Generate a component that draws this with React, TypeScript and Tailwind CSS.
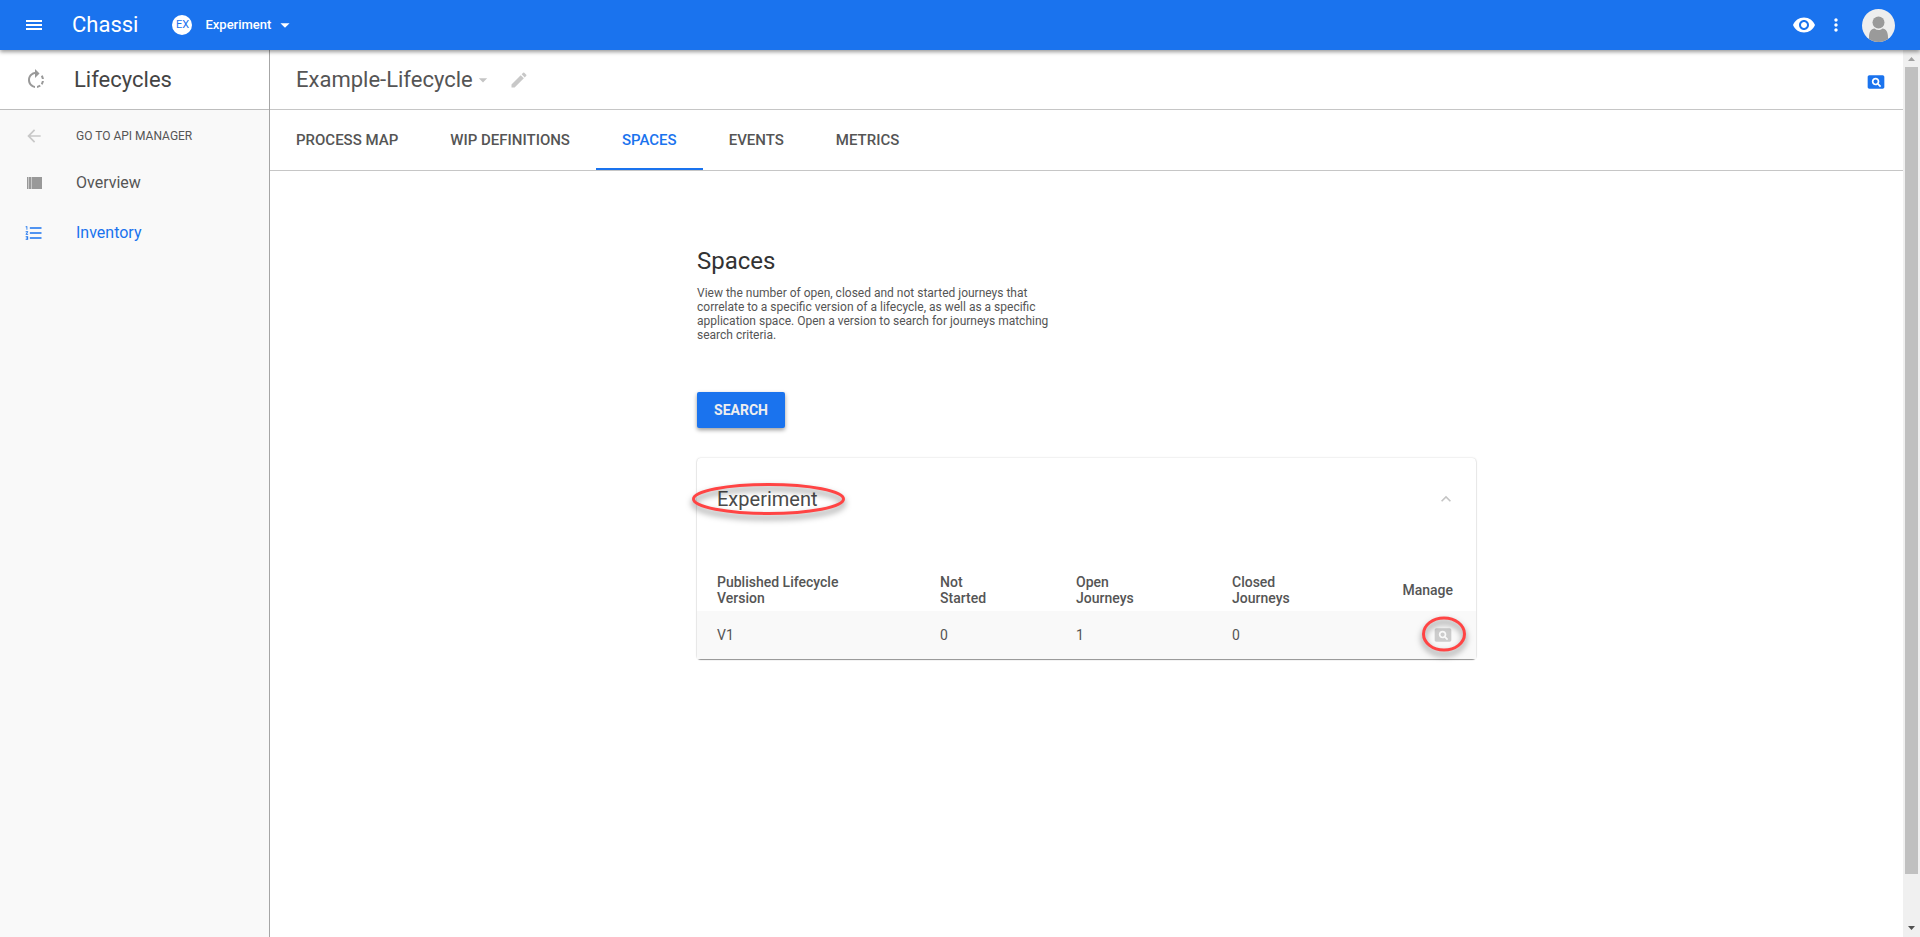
import { useState } from "react";
import {
  MdArrowBack,
  MdArrowDropDown,
  MdEdit,
  MdExpandLess,
  MdFormatListNumbered,
  MdMoreVert,
  MdPageview,
  MdRotateRight,
  MdVisibility,
} from "react-icons/md";

const tabs = ["PROCESS MAP", "WIP DEFINITIONS", "SPACES", "EVENTS", "METRICS"];

const versions = [{ name: "V1", notStarted: 0, open: 1, closed: 0 }];

function Header() {
  return (
    <header className="relative z-10 flex h-[50px] shrink-0 items-center bg-[#1a73ee] text-white shadow-[0_2px_4px_rgba(0,0,0,0.4)]">
      <button aria-label="Menu" className="ml-6">
        <svg className="size-5" viewBox="0 0 20 20" fill="currentColor">
          <path d="M2 5h16v2H2zM2 9h16v2H2zM2 13h16v2H2z" />
        </svg>
      </button>
      <a href="#" className="ml-7 text-[22px] leading-7">
        Chassi
      </a>
      <button className="ml-[34px] flex items-center text-[13px] font-medium">
        <span className="mr-[13px] flex size-5 items-center justify-center rounded-full bg-white text-[11px] font-normal text-[#1a73ee]">
          EX
        </span>
        Experiment
        <MdArrowDropDown size={22} className="ml-[3px]" />
      </button>
      <div className="ml-auto flex items-center pr-[25px]">
        <button aria-label="Watch">
          <MdVisibility size={24} />
        </button>
        <button aria-label="More options" className="ml-2.5">
          <MdMoreVert size={20} />
        </button>
        <button aria-label="Account" className="ml-4">
          <svg className="size-[33px]" viewBox="0 0 33 33">
            <clipPath id="avatar">
              <circle cx="16.5" cy="16.5" r="16.5" />
            </clipPath>
            <g clipPath="url(#avatar)">
              <rect width="33" height="33" fill="#eeeeee" />
              <circle cx="16.5" cy="13.5" r="6" fill="#9a9a9a" />
              <path
                d="M7 33v-5c0-5 2-8 5.500-8.500 2.500 2 5.500 2 8 0C24 20 26 23 26 28v5z"
                fill="#9a9a9a"
              />
            </g>
          </svg>
        </button>
      </div>
    </header>
  );
}

function Sidebar() {
  return (
    <aside className="flex w-[270px] shrink-0 flex-col border-r border-[#a6a6a6] bg-[#f9f9f9] text-[#555]">
      <div className="flex h-[60px] items-center border-b border-[#bdbdbd] bg-white pl-6">
        <MdRotateRight size={24} className="text-[#999]" />
        <h2 className="ml-[26px] text-[22px] leading-7 text-[#444]">
          Lifecycles
        </h2>
      </div>
      <nav>
        <a href="#" className="flex h-[52px] items-center pl-6 text-xs">
          <MdArrowBack size={20} className="text-[#c8c8c8]" />
          <span className="ml-8">GO TO API MANAGER</span>
        </a>
        <a href="#" className="flex h-[42px] items-center pl-6 text-base">
          <svg className="size-5" viewBox="0 0 20 20">
            <path d="M3 4h15v12H3z" fill="#999" />
            <path d="M4 4h1v12H4zM7 4h1v12H7z" fill="#c8c8c8" />
          </svg>
          <span className="ml-8">Overview</span>
        </a>
        <a
          href="#"
          className="flex h-[58px] items-center pl-6 text-base text-[#1a73ee]"
        >
          <MdFormatListNumbered size={20} />
          <span className="ml-8">Inventory</span>
        </a>
      </nav>
    </aside>
  );
}

function SpaceCard() {
  const [open, setOpen] = useState(true);

  return (
    <section className="rounded bg-white text-sm text-[#555] shadow-[0_1px_1px_rgba(0,0,0,0.4),0_0_2px_rgba(0,0,0,0.2)]">
      <div className="flex h-[82px] items-center justify-between px-5">
        <h2 className="relative text-xl text-[#4a4a4a]">
          Experiment
          <svg
            className="absolute -top-4 -left-7 h-[60px] w-[164px] overflow-visible drop-shadow-[0_4px_3px_rgba(0,0,0,0.5)]"
            viewBox="0 0 164 60"
            fill="none"
          >
            <ellipse
              cx="79.500"
              cy="30"
              rx="75"
              ry="14.500"
              stroke="#ff4444"
              strokeWidth="3"
            />
          </svg>
        </h2>
        <button
          aria-label="Toggle experiment"
          onClick={() => setOpen(!open)}
          className="text-[#c4c4c4]"
        >
          <MdExpandLess size={20} />
        </button>
      </div>
      {open && (
        <table className="w-full table-fixed text-left">
          <thead>
            <tr className="h-[71px] align-bottom leading-4">
              <th className="w-[223px] pb-[5px] pl-5 font-medium">
                Published Lifecycle
                <br />
                Version
              </th>
              <th className="w-[136px] pb-[5px] pl-5 font-medium">
                Not
                <br />
                Started
              </th>
              <th className="w-[156px] pb-[5px] pl-5 font-medium">
                Open
                <br />
                Journeys
              </th>
              <th className="pb-[5px] pl-5 font-medium">
                Closed
                <br />
                Journeys
              </th>
              <th className="pr-[23px] pb-[13px] text-right font-medium">
                Manage
              </th>
            </tr>
          </thead>
          <tbody>
            {versions.map((v) => (
              <tr key={v.name} className="h-12 bg-[#f9f9f9]">
                <td className="pl-5">{v.name}</td>
                <td className="pl-5">{v.notStarted}</td>
                <td className="pl-5">{v.open}</td>
                <td className="pl-5">{v.closed}</td>
                <td className="pr-[23px]">
                  <button
                    aria-label="Search journeys"
                    className="relative ml-auto block text-[#ccc]"
                  >
                    <MdPageview size={20} />
                    <svg
                      className="absolute -top-3 -left-3 size-11 max-w-none overflow-visible drop-shadow-[0_4px_3px_rgba(0,0,0,0.5)]"
                      viewBox="0 0 44 44"
                      fill="none"
                    >
                      <ellipse
                        cx="23"
                        cy="21"
                        rx="20.500"
                        ry="16"
                        stroke="#ff4444"
                        strokeWidth="3"
                      />
                    </svg>
                  </button>
                </td>
              </tr>
            ))}
          </tbody>
        </table>
      )}
    </section>
  );
}

function Scrollbar() {
  return (
    <div className="flex w-[17px] shrink-0 flex-col items-center bg-[#f0f0f0]">
      <svg className="h-[17px] w-[17px] shrink-0" viewBox="0 0 17 17">
        <path d="M5 11h7L8.500 7z" fill="#a0a0a0" />
      </svg>
      <div className="w-[13px] flex-1 bg-[#c0c0c0]" />
      <svg className="mt-[46px] h-[17px] w-[17px] shrink-0" viewBox="0 0 17 17">
        <path d="M5 6h7l-3.500 4z" fill="#505050" />
      </svg>
    </div>
  );
}

export default function App() {
  const [tab, setTab] = useState("SPACES");

  return (
    <div className="flex h-screen flex-col overflow-hidden bg-white font-[Roboto,sans-serif] text-[#555]">
      <Header />
      <div className="flex min-h-0 flex-1">
        <Sidebar />
        <main className="min-w-0 flex-1">
          <div className="flex h-[60px] items-center border-b border-[#c6c6c6] pr-[17px] pl-[26px]">
            <h1 className="text-[22px] leading-7">Example-Lifecycle</h1>
            <button aria-label="Choose lifecycle" className="text-[#c4c4c4]">
              <MdArrowDropDown size={20} />
            </button>
            <button aria-label="Edit name" className="ml-4 text-[#c8c8c8]">
              <MdEdit size={20} />
            </button>
            <button aria-label="Search" className="mt-1 ml-auto text-[#1a73ee]">
              <MdPageview size={20} />
            </button>
          </div>
          <nav className="flex h-[61px] border-b border-[#c6c6c6]">
            {tabs.map((name) => (
              <button
                key={name}
                onClick={() => setTab(name)}
                className={`border-b-2 px-[26px] pt-0.5 text-[15px] font-medium ${
                  tab === name
                    ? "border-[#1a73ee] text-[#1a73ee]"
                    : "border-transparent"
                }`}
              >
                {name}
              </button>
            ))}
          </nav>
          <div className="mx-auto max-w-[779px] pt-[74px]">
            <h2 className="text-2xl text-[#333]">Spaces</h2>
            <p className="mt-[9px] w-[370px] text-xs leading-3.5">
              View the number of open, closed and not started journeys that
              correlate to a specific version of a lifecycle, as well as a
              specific application space. Open a version to search for journeys
              matching search criteria.
            </p>
            <button className="mt-[50px] mb-[30px] h-9 min-w-22 rounded-xs bg-[#1a73ee] px-4 text-sm font-bold text-[#eee] shadow-[0_2px_4px_rgba(0,0,0,0.4)]">
              SEARCH
            </button>
            <SpaceCard />
          </div>
        </main>
        <Scrollbar />
      </div>
    </div>
  );
}
